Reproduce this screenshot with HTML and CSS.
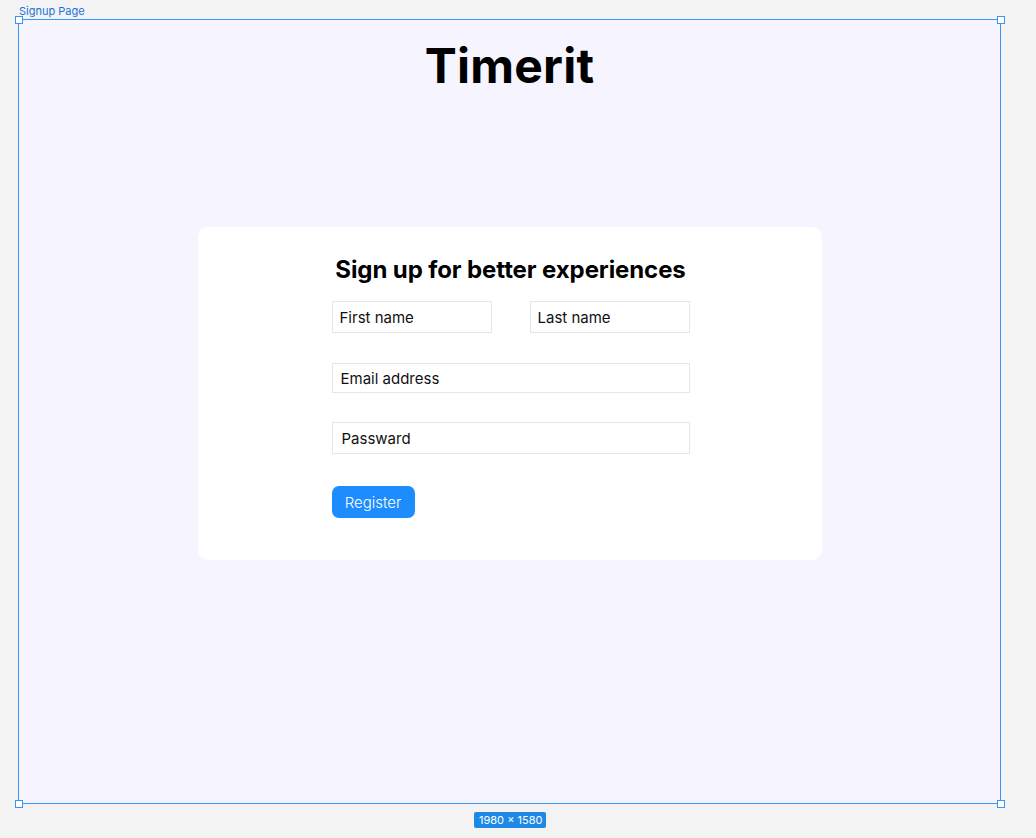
FILE: index.html
```html
<!DOCTYPE html>
<html>
<head>
<meta charset="utf-8">
<link rel="stylesheet" href="styles.css">
</head>
<body>
<div class="canvas">
  <div class="frame-label">Signup Page</div>
  <div class="frame">
    <span class="handle h-tl"></span>
    <span class="handle h-tr"></span>
    <span class="handle h-bl"></span>
    <span class="handle h-br"></span>
    <h1 class="brand">Timerit</h1>
    <div class="card">
      <form class="form">
        <h2 class="form-title">Sign up for better experiences</h2>
        <div class="row">
          <div class="field field-half">First name</div>
          <div class="field field-half">Last name</div>
        </div>
        <div class="field field-email">Email address</div>
        <div class="field field-pass">Passward</div>
        <div class="btn">Register</div>
      </form>
    </div>
    <span class="size-badge">1980 × 1580</span>
  </div>
</div>
</body>
</html>
```

FILE: styles.css
```css
* { box-sizing: border-box; }
html, body { margin: 0; padding: 0; }
body {
  background: #f3f3f3;
  font-family: Inter, "Noto Sans", sans-serif;
  width: 1036px;
  height: 838px;
  overflow: hidden;
}
.canvas {
  padding: 4px 0 0 18px;
}
.frame-label {
  font-size: 11px;
  line-height: 15px;
  color: #1d72d8;
  padding-left: 1px;
}
.frame {
  position: relative;
  width: 983px;
  height: 785px;
  border: 1.5px solid #3a95f4;
  background: #f5f4ff;
  padding-top: 17px;
}
.handle {
  position: absolute;
  width: 8px;
  height: 8px;
  background: #fff;
  border: 1.5px solid #3a95f4;
}
.h-tl { left: -4.5px; top: -4.5px; }
.h-tr { right: -4.5px; top: -4.5px; }
.h-bl { left: -4.5px; bottom: -4.5px; }
.h-br { right: -4.5px; bottom: -4.5px; }
.brand {
  margin: 0;
  text-align: center;
  font-size: 48px;
  font-weight: 700;
  line-height: 58px;
  color: #000;
  letter-spacing: 0.2px;
}
.card {
  width: 624px;
  margin: 132px auto 0;
  background: #fff;
  border-radius: 10px;
  height: 333px;
  padding-top: 27px;
}
.form {
  width: 358px;
  margin: 0 auto;
  display: flex;
  flex-direction: column;
  align-items: flex-start;
  position: relative;
  left: 1px;
}
.form-title {
  margin: 0 0 15px;
  align-self: center;
  font-size: 24px;
  font-weight: 700;
  line-height: 32px;
  color: #000;
  white-space: nowrap;
  letter-spacing: -0.1px;
}
.row {
  display: flex;
  justify-content: space-between;
  width: 100%;
}
.field {
  border: 1px solid #e6e6e6;
  background: #fff;
  font-size: 15px;
  color: #111;
  padding-left: 7px;
  display: flex;
  align-items: center;
}
.field-half { width: 160px; height: 32px; }
.field-email { width: 100%; height: 30px; margin-top: 30px; padding-left: 8px; }
.field-pass { width: 100%; height: 32px; margin-top: 29px; padding-left: 9px; }
.btn {
  margin-top: 32px;
  background: #1c8cff;
  color: #fff;
  font-size: 15px;
  font-weight: 300;
  height: 32px;
  width: 83px;
  border-radius: 7px;
  display: flex;
  align-items: center;
  justify-content: center;
}
.size-badge {
  position: absolute;
  left: 455px;
  top: 792px;
  background: #1e88e5;
  color: #fff;
  font-size: 11px;
  line-height: 16px;
  padding: 0 4px 0 5px;
  border-radius: 2px;
}
```
